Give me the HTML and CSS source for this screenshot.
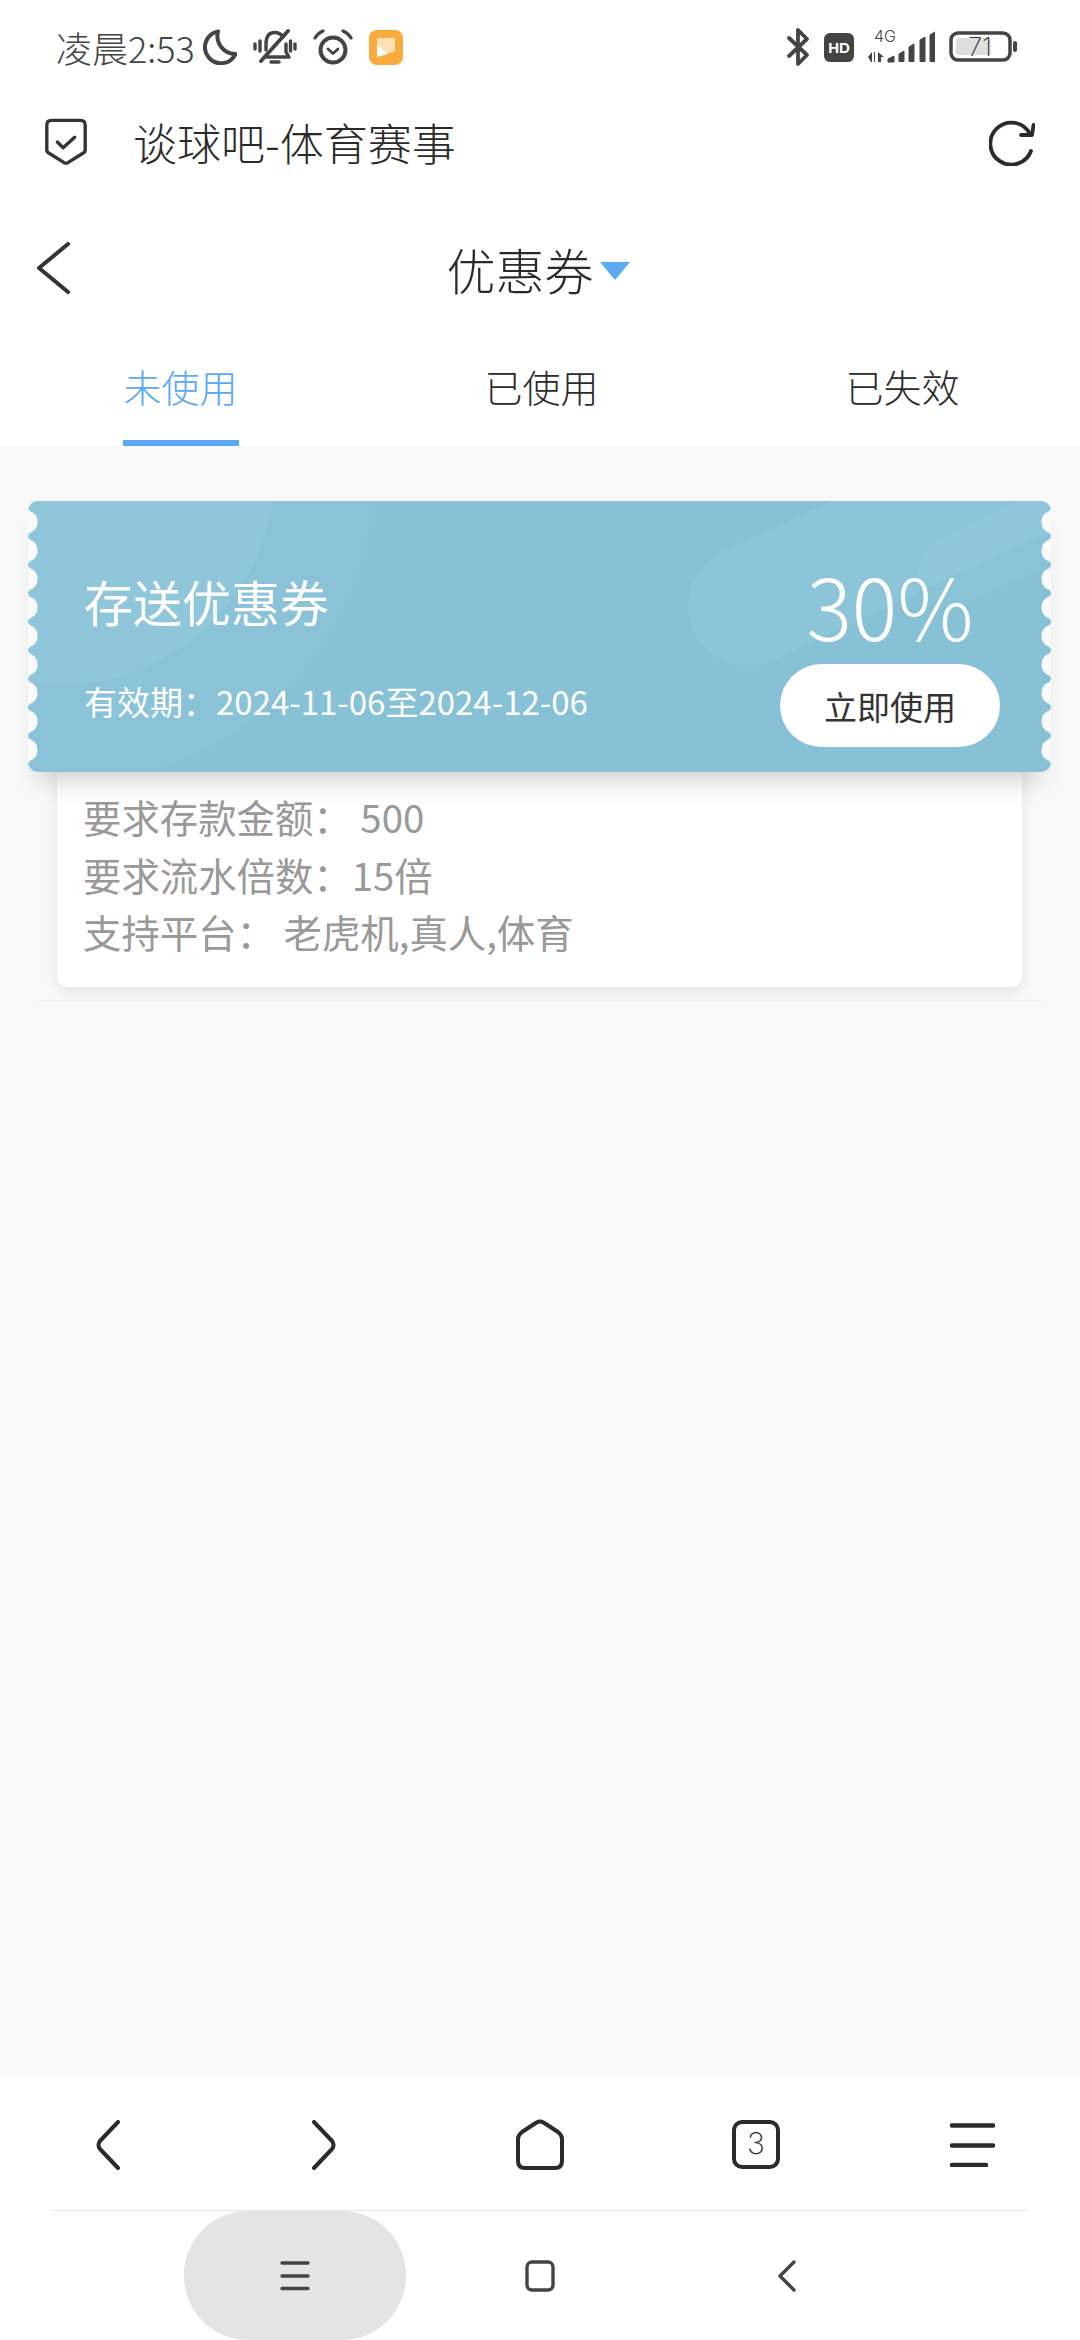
FILE: index.html
```html
<!DOCTYPE html>
<html lang="zh-CN">
<head>
    <meta charset="UTF-8">
    <meta name="viewport" content="width=device-width, initial-scale=1.0">
    <title>优惠券</title>
    <link rel="stylesheet" href="styles.css">
</head>
<body>
    <div class="status-bar">
        <div class="status-left">
            <span class="status-time">凌晨2:53</span>
            <svg width="34" height="36" viewBox="0 0 34 36" fill="none" stroke="#444" stroke-width="4" stroke-linejoin="round">
                <path d="M15 2.500A16 16 0 1 0 32.500 25A18 18 0 0 1 15 2.500Z"/>
            </svg>
            <svg width="44" height="36" viewBox="0 0 44 36" fill="none" stroke="#444" stroke-width="3.400" stroke-linecap="round" stroke-linejoin="round">
                <path d="M30 8C28 5 25 3.500 22 3.500C15 3.500 13 9 13 15V21"/>
                <path d="M33 15V23L36 28H14"/>
                <path d="M8 32L35 2" stroke-width="3.800"/>
                <path d="M18 33H26"/>
                <path d="M2 15V20M7 12V22M37.500 12V22M42 15V20"/>
            </svg>
            <svg width="40" height="36" viewBox="0 0 40 36" fill="none" stroke="#444" stroke-linecap="round" stroke-linejoin="round">
                <circle cx="20" cy="21" r="12.500" stroke-width="4"/>
                <path d="M15 20L20 24.500L25 20" stroke-width="2.800"/>
                <path d="M2 9Q5 4 10 2M38 9Q35 4 30 2" stroke-width="3.200"/>
            </svg>
            <svg width="34" height="35" viewBox="0 0 34 35">
                <rect width="34" height="35" rx="8" fill="#f9ab3d"/>
                <path d="M8 8H26V21L8 27Z" fill="#fde0b4"/>
                <path d="M8 27V15L19 24Z" fill="#fff"/>
            </svg>
        </div>
        <div class="status-right">
            <svg width="24" height="40" viewBox="0 0 24 40" fill="none" stroke="#444" stroke-width="3.800" stroke-linecap="round" stroke-linejoin="round">
                <path d="M3 11L21 28L12 37V3L21 12L3 29"/>
            </svg>
            <div class="hd-badge">HD</div>
            <svg width="67" height="42" viewBox="0 -4 67 42">
                <text x="6" y="12" class="signal-label">4G</text>
                <path d="M0 27L4 22V32H3ZM10 22L16 27H13V32H10ZM6 22H7V32H6Z" fill="#444"/>
                <path d="M20 29L26 26V32H20Z" fill="#444" stroke="#444" stroke-linejoin="round"/>
                <path d="M31 24L36 21V31.500H31Z" fill="#444" stroke="#444" stroke-linejoin="round"/>
                <path d="M41 17L46 14V31.500H41Z" fill="#444" stroke="#444" stroke-linejoin="round"/>
                <path d="M52 10L57 7V31.500H52Z" fill="#444" stroke="#444" stroke-linejoin="round"/>
                <path d="M62 5L67 2V31.500H62Z" fill="#444" stroke="#444" stroke-linejoin="round"/>
            </svg>
            <svg width="68" height="32" viewBox="0 0 68 32">
                <rect x="2" y="2" width="59" height="27" rx="7" fill="none" stroke="#444" stroke-width="3.500"/>
                <rect x="7" y="7" width="35" height="17" rx="2" fill="#dedede"/>
                <rect x="64" y="10" width="4" height="11" rx="2" fill="#444"/>
                <text x="31" y="25" text-anchor="middle" class="battery-label">71</text>
            </svg>
        </div>
    </div>

    <div class="browser-bar">
        <svg width="44" height="48" viewBox="0 0 44 50" fill="none" stroke="#333" stroke-linecap="round" stroke-linejoin="round">
            <path d="M7 2.500H37Q42 2.500 42 7.500V33Q42 35.500 40 36.500L24 46.500Q22 47.500 20 46.500L4 36.500Q2 35.500 2 33V7.500Q2 2.500 7 2.500Z" stroke-width="3.500"/>
            <path d="M13 25L19 31L31 20" stroke-width="3.500"/>
        </svg>
        <div class="browser-title">谈球吧-体育赛事</div>
        <svg class="refresh" width="46" height="48" viewBox="0 0 46 48" fill="none" stroke="#2b2b2b" stroke-width="3.800" stroke-linecap="round" stroke-linejoin="round">
            <path d="M42 33A21 21 0 1 1 41 16"/>
            <path d="M44.500 7L43 17L32 17"/>
        </svg>
    </div>

    <div class="page-head">
        <svg class="back" width="34" height="52" viewBox="0 0 34 52" fill="none" stroke="#333" stroke-width="4" stroke-linecap="round" stroke-linejoin="round">
            <path d="M32 2L3 26L32 50"/>
        </svg>
        <div class="page-title">
            <span>优惠券</span>
            <i class="caret"></i>
        </div>
    </div>

    <div class="tabs">
        <div class="tab"><span class="tab-text active">未使用</span></div>
        <div class="tab"><span class="tab-text">已使用</span></div>
        <div class="tab"><span class="tab-text">已失效</span></div>
    </div>

    <main class="content">
        <div class="coupon-item">
            <div class="coupon">
                <svg class="coupon-deco" width="1023" height="271" viewBox="0 0 1023 271">
                    <defs>
                        <pattern id="scallop" width="10" height="28.500" patternUnits="userSpaceOnUse" y="6.750">
                            <path d="M0 0Q0 2.500 2 3.500C6 5 9.500 8 9.500 14.250C9.500 20.500 6 23.500 2 25Q0 26 0 28.500Z" fill="#fafafa"/>
                        </pattern>
                    </defs>
                    <circle cx="32" cy="-31" r="315" fill="#fff" fill-opacity="0.04"/>
                    <circle cx="32" cy="-31" r="215" fill="#fff" fill-opacity="0.06"/>
                    <rect x="660" y="45" width="560" height="120" rx="60" fill="#fff" fill-opacity="0.05" transform="rotate(-25 720 105)"/>
                    <rect x="890" y="35" width="300" height="70" rx="35" fill="#fff" fill-opacity="0.04" transform="rotate(-25 925 70)"/>
                    <!-- ticket edges -->
                    <rect y="6.750" width="10" height="256.500" fill="url(#scallop)"/>
                    <rect y="6.750" width="10" height="256.500" fill="url(#scallop)" transform="translate(1023 0) scale(-1 1)"/>
                </svg>
                <div class="coupon-left">
                    <div class="coupon-name">存送优惠券</div>
                    <div class="coupon-date">有效期：2024-11-06至2024-12-06</div>
                </div>
                <div class="coupon-right">
                    <div class="coupon-rate">30%</div>
                    <div class="coupon-btn">立即使用</div>
                </div>
            </div>
            <div class="coupon-info">
                <div>要求存款金额： 500</div>
                <div>要求流水倍数：15倍</div>
                <div>支持平台： 老虎机,真人,体育</div>
            </div>
        </div>
    </main>

    <nav class="bottom-nav">
        <svg width="24" height="50" viewBox="0 0 24 50" fill="none" stroke="#2b2b2b" stroke-width="4" stroke-linecap="round" stroke-linejoin="round">
            <path d="M22 2L4 21Q1 25 4 29L22 48"/>
        </svg>
        <svg width="24" height="50" viewBox="0 0 24 50" fill="none" stroke="#2b2b2b" stroke-width="4" stroke-linecap="round" stroke-linejoin="round">
            <path d="M2 2L20 21Q23 25 20 29L2 48"/>
        </svg>
        <svg width="48" height="51" viewBox="0 0 48 51" fill="none" stroke="#2b2b2b" stroke-width="4" stroke-linejoin="round">
            <path d="M20.500 3.500Q24 1.500 27.500 3.500L42 13Q46 16 46 20V42Q46 49 39 49H9Q2 49 2 42V20Q2 16 6 13Z"/>
        </svg>
        <div class="tab-count">3</div>
        <svg width="45" height="44" viewBox="0 0 45 44" fill="none" stroke="#2b2b2b" stroke-width="4.400" stroke-linecap="round">
            <path d="M2 2.500H43M2 22.500H43M2 42H36"/>
        </svg>
    </nav>

    <div class="system-nav">
        <div class="system-pill">
            <svg width="30" height="30" viewBox="0 0 30 30" fill="none" stroke="#444" stroke-width="3.400" stroke-linecap="round">
                <path d="M2 2H28M2 15H28M2 27.500H28"/>
            </svg>
        </div>
        <svg class="system-home" width="30" height="32" viewBox="0 0 30 32" fill="none" stroke="#444" stroke-width="3.400">
            <rect x="2" y="2" width="26" height="28" rx="5"/>
        </svg>
        <svg class="system-back" width="18" height="32" viewBox="0 0 18 32" fill="none" stroke="#444" stroke-width="3.400" stroke-linecap="round" stroke-linejoin="round">
            <path d="M16 2L2 16L16 30"/>
        </svg>
    </div>
</body>
</html>
```

FILE: styles.css
```css
* {
    box-sizing: border-box;
}

body {
    margin: 0;
    width: 1080px;
    height: 2340px;
    display: flex;
    flex-direction: column;
    background-color: #fff;
    color: #333;
    font-family: "Noto Sans CJK SC", "Noto Sans", sans-serif;
    overflow: hidden;
}

svg {
    display: block;
    flex-shrink: 0;
}

/* status bar */
.status-bar {
    height: 94px;
    padding: 0 63px 0 56px;
    display: flex;
    align-items: center;
    justify-content: space-between;
}

.status-left, .status-right {
    display: flex;
    align-items: center;
    gap: 16px;
}

.status-right {
    gap: 14px;
}

.status-time {
    margin-right: -8px;
    font-size: 36px;
    font-weight: 300;
    color: #444;
    white-space: nowrap;
}

.hd-badge {
    width: 30px;
    height: 29px;
    border-radius: 6px;
    background-color: #444;
    color: #fff;
    font-family: "Liberation Sans", sans-serif;
    font-size: 15px;
    font-weight: 700;
    line-height: 29px;
    text-align: center;
}

.signal-label {
    font-family: "Inter", sans-serif;
    font-size: 16px;
    font-weight: 300;
    fill: #444;
}

.battery-label {
    font-family: "Inter", sans-serif;
    font-size: 25px;
    font-weight: 200;
    fill: #333;
}

/* browser bar */
.browser-bar {
    height: 95px;
    padding: 0 45px 0 44px;
    display: flex;
    align-items: center;
    gap: 45px;
}

.browser-title {
    font-size: 44px;
    font-weight: 300;
    color: #2a2a2a;
    white-space: nowrap;
}

.refresh {
    margin-left: auto;
}

/* page head */
.page-head {
    height: 158px;
    display: grid;
    grid-template-columns: 1fr auto 1fr;
    align-items: center;
}

.back {
    margin-left: 36px;
}

.page-title {
    display: flex;
    align-items: center;
    gap: 6px;
    padding-right: 4px;
    font-size: 49px;
    font-weight: 300;
    color: #2a2a2a;
}

.caret {
    width: 0;
    height: 0;
    margin-top: 6px;
    border-left: 15px solid transparent;
    border-right: 15px solid transparent;
    border-top: 18px solid #5aa9f2;
}

/* tabs */
.tabs {
    height: 99px;
    margin-right: -3px;
    display: grid;
    grid-template-columns: repeat(3, 361px);
    text-align: center;
}

.tab-text {
    display: inline-block;
    width: 116px;
    height: 99px;
    font-size: 38px;
    font-weight: 300;
    line-height: 78px;
    color: #2a2a2a;
}

.tab-text.active {
    color: #5aa9f2;
    border-bottom: 6px solid #5aa9f2;
}

/* coupon list */
.content {
    flex: 1;
    padding: 55px 37px 0 36px;
    background-color: #f9f9f9;
}

.coupon-item {
    padding-bottom: 13px;
    border-bottom: 1px solid #f3f3f3;
}

.coupon {
    position: relative;
    height: 271px;
    margin: 0 -8px;
    padding: 0 51px 0 56px;
    display: flex;
    justify-content: space-between;
    border-radius: 10px;
    background-color: #86c1d6;
    color: #fff;
    box-shadow: 0 20px 24px -12px rgba(0, 0, 0, 0.2);
    overflow: hidden;
}

.coupon-deco {
    position: absolute;
    left: 0;
    top: 0;
}

.coupon-left, .coupon-right {
    position: relative;
}

.coupon-name {
    margin-top: 64px;
    font-size: 49px;
    line-height: 72px;
}

.coupon-date {
    margin-top: 40px;
    font-size: 33px;
    line-height: 48px;
    white-space: nowrap;
}

.coupon-right {
    width: 220px;
    display: flex;
    flex-direction: column;
    align-items: center;
}

.coupon-rate {
    height: 163px;
    padding-top: 50px;
    font-size: 85px;
    font-weight: 300;
    line-height: 106px;
    white-space: nowrap;
}

.coupon-btn {
    width: 220px;
    height: 83px;
    border-radius: 42px;
    background-color: #fff;
    color: #333;
    font-size: 33px;
    line-height: 84px;
    text-align: center;
}

.coupon-info {
    margin: 0 21px;
    padding: 16px 26px 26px;
    border-radius: 0 0 10px 10px;
    background-color: #fff;
    box-shadow: 0 5px 14px rgba(0, 0, 0, 0.09);
    color: #999;
    font-size: 38.4px;
    line-height: 57.5px;
    white-space: nowrap;
}

/* bottom bars */
.bottom-nav {
    position: relative;
    height: 133px;
    display: grid;
    grid-template-columns: repeat(5, 1fr);
    align-items: center;
    justify-items: center;
}

.bottom-nav::after {
    content: "";
    position: absolute;
    left: 51px;
    right: 52px;
    bottom: 0;
    height: 1px;
    background-color: #e5e5e5;
}

.tab-count {
    width: 48px;
    height: 49px;
    border: 4px solid #2b2b2b;
    border-radius: 10px;
    color: #2b2b2b;
    font-family: "Inter", sans-serif;
    font-size: 30px;
    font-weight: 200;
    line-height: 39px;
    text-align: center;
}

.system-nav {
    height: 129px;
    display: flex;
    align-items: center;
    padding-left: 184px;
}

.system-pill {
    width: 222px;
    height: 129px;
    border-radius: 64px;
    background-color: #e4e4e4;
    display: flex;
    align-items: center;
    justify-content: center;
}

.system-home {
    margin-left: 119px;
}

.system-back {
    margin-left: 223px;
}
```
